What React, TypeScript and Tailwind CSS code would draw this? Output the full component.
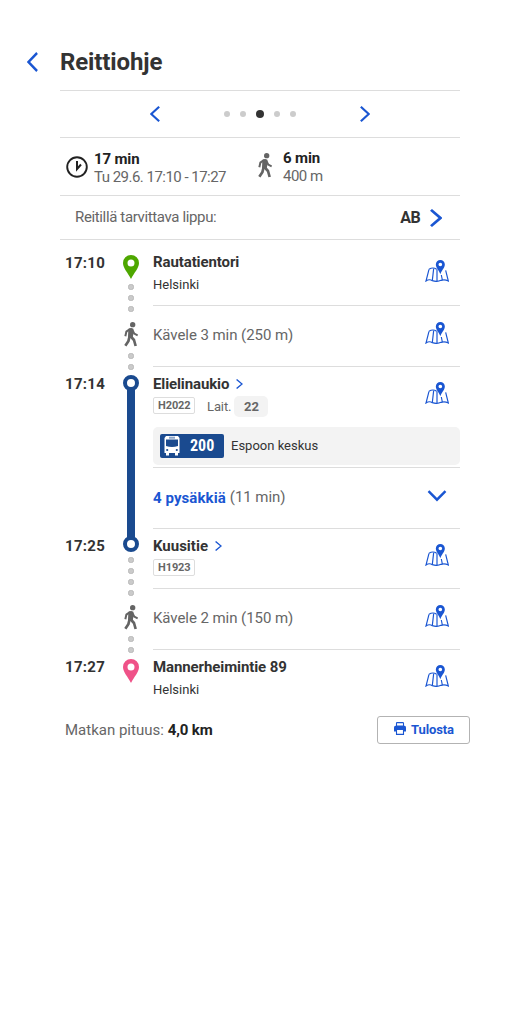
import type { ReactNode } from 'react';

function Chevron({ className, width = 3 }: { className: string; width?: number }) {
  return (
    <svg viewBox="0 0 12 20" preserveAspectRatio="none" className={`shrink-0 ${className}`} fill="none">
      <path d="M1 1 L10.5 10 L1 19" stroke="currentColor" strokeWidth={width} />
    </svg>
  );
}

function Walker({ className = '' }: { className?: string }) {
  return (
    <svg viewBox="0 0 42 75" className={`w-3.5 h-[25px] shrink-0 text-[#646464] ${className}`} fill="none" stroke="currentColor" strokeLinejoin="round">
      <circle cx="26" cy="8" r="8" fill="currentColor" stroke="none" />
      <path d="M13 21 Q20 15 28 20 L29 29 L26 48 L12 46 Z" fill="currentColor" stroke="none" />
      <path d="M18 21 L7 29 L4 43" strokeWidth="6" />
      <path d="M25 24 L31 35 L41 40" strokeWidth="6" />
      <path d="M17 42 L13 58 L4 71" strokeWidth="8" />
      <path d="M19 42 L30 54 L35 72" strokeWidth="8" />
    </svg>
  );
}

function MapIcon({ className = '' }: { className?: string }) {
  return (
    <svg viewBox="0 0 72 66" className={`ml-auto mr-[11px] w-6 h-[22px] shrink-0 text-[#1a56d2] ${className}`} fill="none" stroke="currentColor" strokeWidth="3.500">
      <path d="M12 28 L3 63 Q13 56 22 62 Q36 67 48 61 Q59 57 70 63 L62 31" />
      <path d="M12 28 Q24 20 35 28" />
      <path d="M26 26 L22 61 M36 28 V63 M49 45 L52 60" />
      <path fill="currentColor" stroke="none" fillRule="evenodd" d="M46 0 A13.500 13.500 0 0 0 32.500 13.500 C32.500 24 43 32 46 43 C49 32 59.500 24 59.500 13.500 A13.500 13.500 0 0 0 46 0 Z M46 8 A5.500 5.500 0 1 1 46 19 A5.500 5.500 0 1 1 46 8 Z" />
    </svg>
  );
}

function Pin({ className }: { className: string }) {
  return (
    <svg viewBox="0 0 16 24" className={`w-4 h-6 shrink-0 ${className}`}>
      <path fill="currentColor" fillRule="evenodd" d="M8 0 A8 8 0 0 0 0 8 C0 13 5 18 8 24 C11 18 16 13 16 8 A8 8 0 0 0 8 0 Z M8 4.5 A3.5 3.5 0 1 1 8 11.5 A3.5 3.5 0 1 1 8 4.5 Z" />
    </svg>
  );
}

function Dots({ count, className }: { count: number; className: string }) {
  return (
    <div className={`flex flex-col gap-[5px] shrink-0 ${className}`}>
      {Array.from({ length: count }, (_, i) => (
        <span key={i} className="size-1.5 rounded-[2.5px] bg-[#cacaca] border border-[#b9b9b9]" />
      ))}
    </div>
  );
}

function Stop() {
  return <span className="size-4 shrink-0 rounded-full border-4 border-[#1a4a8f] bg-white" />;
}

function Bus() {
  return (
    <svg viewBox="0 0 16 20" className="w-4 h-5 shrink-0">
      <path fill="#fff" d="M2 0 H14 L15.5 2 V17 H0.5 V2 Z M2 16 h3 v3.5 h-3 Z M11 16 h3 v3.5 h-3 Z" />
      <path fill="#1a4a8f" d="M2 3.5 H14 V10 Q8 12 2 10 Z" />
      <path fill="#8da5c8" d="M5 .7 h6 v2 h-6 Z" />
      <circle cx="3.2" cy="14" r="1.1" fill="#1a4a8f" />
      <circle cx="12.8" cy="14" r="1.1" fill="#1a4a8f" />
    </svg>
  );
}

function Leg({ time, line, timeClass, height, children }: { time?: string; line: ReactNode; timeClass?: string; height: string; children: ReactNode }) {
  return (
    <div className={`flex ${height}`}>
      <div className={`w-[63px] pl-[5px] text-[15px] leading-5 font-bold tracking-[0.3px] text-[#333] ${timeClass ?? ''}`}>{time}</div>
      <div className="w-4 flex flex-col items-center">{line}</div>
      <div className="ml-3.5 flex-1 flex flex-col">{children}</div>
    </div>
  );
}

function Code({ children }: { children: string }) {
  return <span className="h-[17px] w-[42px] pl-1 border border-[#ddd] rounded-xs text-[11px] leading-[15px] font-bold tracking-[-0.1px] text-[#666]">{children}</span>;
}

export default function App() {
  return (
    <main className="w-[520px] h-[1010px] bg-white font-[Roboto,sans-serif] text-[#333]">
      <header className="flex h-[90px] pt-[47px]">
        <Chevron className="ml-[27px] mt-[5px] w-[11px] h-5 rotate-180 text-[#1a56d2]" width={2.6} />
        <h1 className="ml-[22px] text-2xl leading-[30px] font-bold tracking-[-0.12px]">Reittiohje</h1>
      </header>
      <div className="ml-[60px] w-[400px]">
        <nav className="h-12 border-y border-[#ddd] flex items-center justify-between px-[90px]">
          <Chevron className="w-2.5 h-4 rotate-180 text-[#1a56d2]" width={2.6} />
          <div className="flex items-center gap-2.5">
            <span className="size-1.5 rounded-full bg-[#ccc]" />
            <span className="size-1.5 rounded-full bg-[#ccc]" />
            <span className="size-2 rounded-full bg-[#333]" />
            <span className="size-1.5 rounded-full bg-[#ccc]" />
            <span className="size-1.5 rounded-full bg-[#ccc]" />
          </div>
          <Chevron className="w-2.5 h-4 text-[#1a56d2]" width={2.6} />
        </nav>

        <section className="h-[58px] border-b border-[#ddd] flex text-[15px] leading-[18px]">
          <svg viewBox="0 0 22 22" className="ml-1.5 mt-[18px] size-[22px]" fill="none" stroke="#222">
            <circle cx="11" cy="11" r="9.8" strokeWidth="1.9" />
            <path d="M11 5 V13 L15 8.5" strokeWidth="2" />
          </svg>
          <div className="ml-1.5 mt-3 w-[163px]">
            <div className="font-bold text-[#222] tracking-[-0.15px]">17 min</div>
            <div className="text-[#666] tracking-[-0.52px]">Tu 29.6. 17:10 - 17:27</div>
          </div>
          <Walker className="ml-px mt-[15px]" />
          <div className="ml-[11px] mt-[11px]">
            <div className="font-bold text-[#222] tracking-[-0.15px]">6 min</div>
            <div className="text-[#666] tracking-[-0.5px]">400 m</div>
          </div>
        </section>

        <section className="h-11 border-b border-[#ddd] flex items-center pl-[15px] pr-[18px] text-[15px]">
          <span className="text-[#666] tracking-[-0.36px]">Reitillä tarvittava lippu:</span>
          <span className="ml-auto text-base font-bold tracking-[-0.6px]">AB</span>
          <Chevron className="ml-2.5 w-3 h-[18px] text-[#1a56d2]" width={2.8} />
        </section>

        <Leg time="17:10" height="h-[66px]" timeClass="pt-[13px]" line={<><Pin className="mt-[15px] text-[#4ea700]" /><span className="w-1 h-px bg-[#bbb]" /><Dots count={3} className="mt-[5px]" /></>}>
          <div className="flex-1 border-b border-[#ddd] flex">
            <div className="pt-[13px]">
              <div className="text-[15px] leading-[18px] font-bold tracking-[-0.1px]">Rautatientori</div>
              <div className="mt-[5px] text-[13px] leading-[18px]">Helsinki</div>
            </div>
            <MapIcon className="mt-5" />
          </div>
        </Leg>

        <Leg height="h-[61px]" line={<><Walker className="mt-4" /><Dots count={2} className="mt-1.5" /></>}>
          <div className="flex-1 border-b border-[#ddd] flex">
            <div className="mt-5 text-[15px] leading-[18px] tracking-[-0.06px] text-[#666]">Kävele 3 min (250 m)</div>
            <MapIcon className="mt-4" />
          </div>
        </Leg>

        <Leg time="17:14" height="h-[162px]" timeClass="pt-[7px]" line={<><span className="mt-2 flex shrink-0"><Stop /></span><span className="-my-px w-2 flex-1 bg-[#1a4a8f]" /></>}>
          <div className="h-[101px] border-b border-[#ddd]">
            <div className="flex h-[60px]">
              <div className="pt-2">
                <div className="flex items-center text-[15px] leading-[18px] font-bold tracking-[-0.12px]">
                  Elielinaukio
                  <Chevron className="ml-[7px] w-[7px] h-2.5 text-[#1a56d2]" width={2.4} />
                </div>
                <div className="flex mt-[3px] text-[13px] text-[#666]">
                  <span className="mt-px flex"><Code>H2022</Code></span>
                  <span className="ml-3 leading-[21px] tracking-[-0.1px]">Lait.</span>
                  <span className="ml-[3px] w-[34px] h-[21px] rounded-[5px] bg-[#f3f3f3] text-center leading-[21px] font-bold">22</span>
                </div>
              </div>
              <MapIcon className="mt-[15px]" />
            </div>
            <div className="h-[38px] rounded-[5px] bg-[#f3f3f3] flex items-center pl-[7px] text-[13px]">
              <span className="w-16 h-6 rounded-xs bg-[#1a4a8f] flex items-center pl-1 text-white">
                <Bus />
                <span className="ml-2.5 font-['Roboto_Condensed',Roboto,sans-serif] [font-stretch:75%] text-base font-bold">200</span>
              </span>
              <span className="ml-[7px]">Espoon keskus</span>
            </div>
          </div>
          <div className="h-[61px] border-b border-[#ddd] flex items-start pt-5 text-[15px] leading-[18px]">
            <span className="mt-px font-bold text-[#1a56d2] tracking-[0.08px]">4 pysäkkiä</span>
            <span className="ml-1 text-[#666] tracking-[-0.06px]">(11 min)</span>
            <svg viewBox="0 0 20 12" className="ml-auto mr-[13px] mt-0.5 w-5 h-3 text-[#1a56d2]" fill="none">
              <path d="M1.5 1.2 L10 9.7 L18.500 1.2" stroke="currentColor" strokeWidth="2.4" />
            </svg>
          </div>
        </Leg>

        <Leg time="17:25" height="h-[60px]" timeClass="pt-[7px]" line={<><span className="w-2 h-[9px] shrink-0 bg-[#1a4a8f]" /><span className="-mt-[2px] flex shrink-0"><Stop /></span><Dots count={4} className="mt-[5px]" /></>}>
          <div className="flex-1 border-b border-[#ddd] flex">
            <div className="pt-2">
              <div className="flex items-center text-[15px] leading-[18px] font-bold">
                Kuusitie
                <Chevron className="ml-[7px] w-[7px] h-2.5 text-[#1a56d2]" width={2.4} />
              </div>
              <div className="mt-1 flex"><Code>H1923</Code></div>
            </div>
            <MapIcon className="mt-[15px]" />
          </div>
        </Leg>

        <Leg height="h-[61px]" line={<><Walker className="mt-4" /><Dots count={2} className="mt-1.5" /></>}>
          <div className="flex-1 border-b border-[#ddd] flex">
            <div className="mt-5 text-[15px] leading-[18px] tracking-[-0.06px] text-[#666]">Kävele 2 min (150 m)</div>
            <MapIcon className="mt-4" />
          </div>
        </Leg>

        <Leg time="17:27" height="h-[66px]" timeClass="pt-[7px]" line={<Pin className="mt-[9px] text-[#ef5288]" />}>
          <div className="flex">
            <div className="pt-2">
              <div className="text-[15px] leading-[18px] font-bold tracking-[-0.1px]">Mannerheimintie 89</div>
              <div className="mt-[5px] text-[13px] leading-[18px]">Helsinki</div>
            </div>
            <MapIcon className="mt-[15px]" />
          </div>
        </Leg>

        <footer className="-mr-2.5 flex items-center pl-[5px] h-7 text-[15px] text-[#666]">
          <span>Matkan pituus:</span>
          <span className="ml-1 font-bold text-[#222] tracking-[-0.15px]">4,0 km</span>
          <button className="ml-auto w-[93px] h-7 rounded-[3px] border border-[#b3b3b3] bg-white flex items-center pl-4 gap-[5px] text-[13px] font-bold tracking-[-0.1px] text-[#1a56d2]">
            <svg viewBox="0 0 12 13" className="-mt-[3px] w-3 h-[13px] shrink-0">
              <path fill="currentColor" d="M1.500 3.800 H10.500 Q12 4 12 5.500 V9.500 H0 V5.500 Q0 4 1.500 3.800 Z" />
              <path d="M2.500 4 V1.200 Q2.500 .6 3.200 .6 H8.800 Q9.500 .6 9.500 1.200 V4 Z M2.500 7.500 H9.500 V12.400 H2.500 Z" fill="white" stroke="currentColor" strokeWidth="1.100" />
            </svg>
            Tulosta
          </button>
        </footer>
      </div>
    </main>
  );
}
